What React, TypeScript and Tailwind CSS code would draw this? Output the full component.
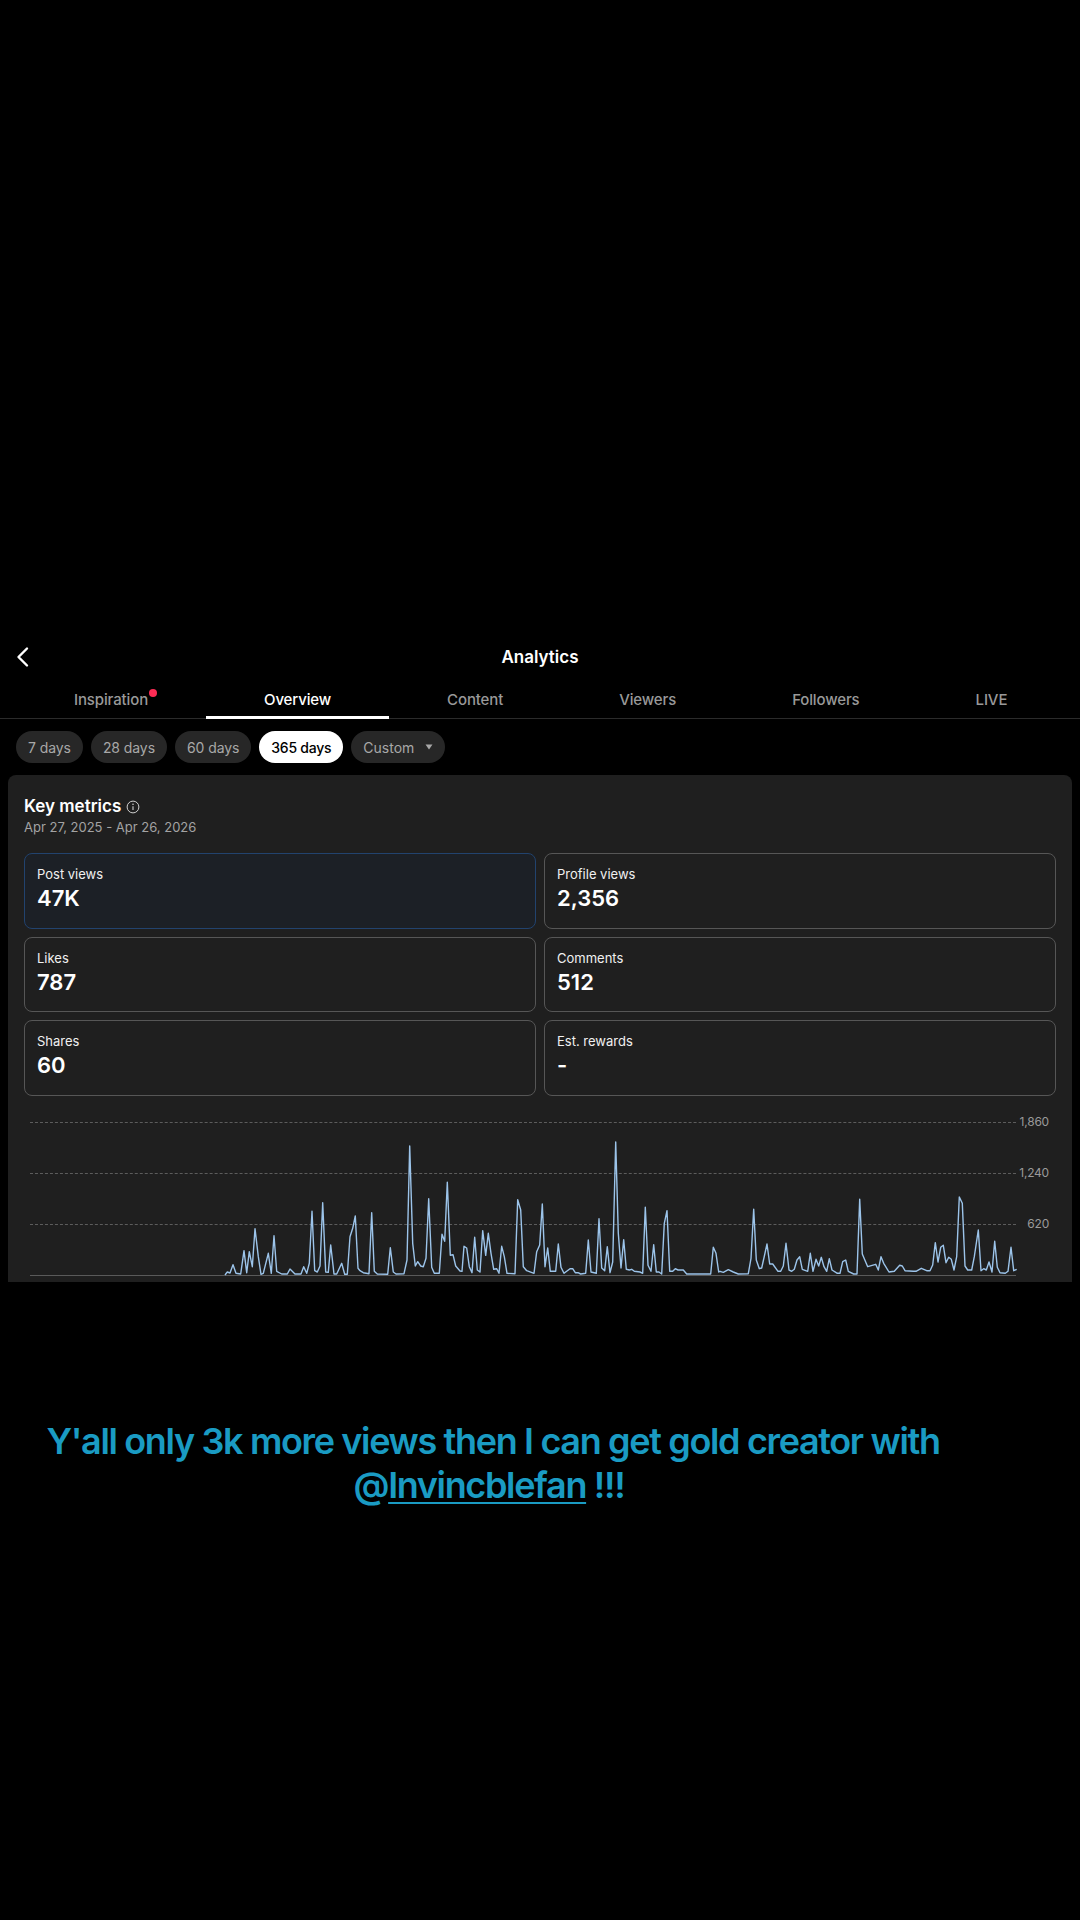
const seg3: number[] = [675,495,682,486,690,489,699,464,708,490,722,492,732,422,740,488,748,425,757,470,765,356,775,440,783,493,790,490,805,430,814,490,822,377,830,484,845,492,862,492,870,477,885,492,903,492,911,470,920,490,928,460,936,304,944,482,952,486,960,468,968,278,977,486,985,487,992,405,1002,492,1010,492,1025,460,1034,493,1042,493,1050,380,1058,355,1066,318,1074,475];
const seg4: number[] = [0,482,10,488,27,491,35,308,43,484,52,492,83,493,91,413,100,486,108,492,132,491,141,450,149,108,158,400,166,468,173,455,182,468,190,470,198,445,206,266,215,472,223,490,238,490,246,373,254,394,262,217,271,436,279,434,287,468,300,483,306,484,312,409,320,414,328,470,336,488,344,382,352,480,360,486,368,362,377,436,385,370,393,430,401,478,410,476,417,490,425,409,433,440,441,490,465,491,473,269,482,300,490,470,500,482,522,490,530,425,539,405,547,282,555,470,563,414,571,484,587,484,595,402,603,472,612,490,630,476,638,476,646,488,654,488,662,492,677,490,685,390,693,486,709,490,717,326,725,474,734,482,742,410,750,488,758,456,767,96,775,370,783,474,791,389,799,478,808,480,815,478,823,484,840,486,848,490,856,292,864,466,873,484,881,404,889,486,897,486,905,492,913,340,921,302,929,484,938,484,946,476,954,480,970,480,980,492,1052,492,1060,412,1068,430,1076,486];
const seg5: number[] = [0,484,10,487,25,479,40,486,55,492,85,491,93,445,101,298,109,450,118,476,125,474,141,402,149,462,158,462,174,484,182,484,190,468,198,400,207,480,215,484,223,478,231,450,239,440,247,478,263,484,271,430,279,484,288,448,296,468,304,442,312,470,320,484,328,446,336,480,352,490,360,490,368,455,377,450,385,484,401,492,411,492,419,268,427,432,443,470,467,463,475,480,483,440,491,460,507,486,523,484,539,466,547,468,555,482,580,484,588,484,604,475,620,482,630,482,638,465,646,398,654,456,662,412,670,406,678,458,686,442,694,448,702,480,710,440,718,261,727,280,735,468,743,480,755,480,763,440,775,360,783,482,791,476,799,480,807,456,816,486,824,394,832,472,840,488,856,490,864,484,873,412,881,482,890,478];

function toPoints(seg: number[], offset: number) {
  const out: string[] = [];
  for (let i = 0; i < seg.length; i += 2) {
    out.push(`${(offset + seg[i] / 3).toFixed(1)},${(seg[i + 1] / 3 + 1110).toFixed(1)}`);
  }
  return out.join(" ");
}
const points = [toPoints(seg3, 0), toPoints(seg4, 360), toPoints(seg5, 720)].join(" ");

const tabs = ["Inspiration", "Overview", "Content", "Viewers", "Followers", "LIVE"];
const pills = ["7 days", "28 days", "60 days"];
const metrics = [
  ["Post views", "47K"],
  ["Profile views", "2,356"],
  ["Likes", "787"],
  ["Comments", "512"],
  ["Shares", "60"],
  ["Est. rewards", "-"],
];

function GridRow({ label }: { label: string }) {
  return (
    <div className="flex h-[51px] items-start">
      <div className="w-[986px] border-t border-dashed border-[#5c5c5c]" />
      <div className="flex-1 -mt-[9px] flex justify-end text-[12px] leading-[18px] tracking-[-0.2px] text-[#9a9a9a] whitespace-nowrap">{label}</div>
    </div>
  );
}

export default function App() {
  return (
    <div className="w-[1080px] h-[1920px] bg-black overflow-hidden font-['Inter','Liberation_Sans',sans-serif] pt-[636px]">
      <div className="relative h-[42px] flex items-center justify-center pt-[1px]">
        <svg className="absolute left-[14px] top-[9px]" width="18" height="24" viewBox="0 0 18 24" fill="none">
          <path d="M13 3.5 L4.5 12 L13 20.5" stroke="#ffffff" strokeWidth="2.4" strokeLinecap="round" strokeLinejoin="round" />
        </svg>
        <span className="text-[17px] font-semibold text-white">Analytics</span>
      </div>

      <div className="flex h-[41px] pl-4 border-b border-[#2b2b2b]">
        {tabs.map((t, i) => (
          <div
            key={t}
            className={
              i === 1
                ? "relative px-[58px] pt-[6px] flex items-center text-[15px] tracking-[-0.13px] font-medium text-white whitespace-nowrap border-b-[3px] border-white -mb-px"
                : "relative px-[58px] pt-[6px] flex items-center text-[15px] tracking-[-0.13px] font-medium text-[#999999] whitespace-nowrap border-b-[3px] border-transparent -mb-px"
            }
          >
            {t}
            {i === 0 && <span className="absolute right-[49px] top-[11px] w-2 h-2 rounded-full bg-[#fe2c55]" />}
          </div>
        ))}
      </div>

      <div className="flex gap-2 pl-4 mt-3 h-8">
        {pills.map((p) => (
          <div key={p} className="h-8 px-3 flex items-center rounded-full bg-[#272727] text-[14px] tracking-[-0.08px] text-[#a8a8a8]">{p}</div>
        ))}
        <div className="h-8 px-3 flex items-center rounded-full bg-white text-[14px] font-medium tracking-[-0.25px] text-black">365 days</div>
        <div className="h-8 px-3 flex items-center gap-[11px] rounded-full bg-[#272727] text-[14px] text-[#a8a8a8]">
          Custom
          <svg width="8" height="6" viewBox="0 0 8 6"><path d="M0.5 0.5 H7.5 L4 5.5 Z" fill="#a8a8a8" /></svg>
        </div>
      </div>

      <div className="relative mx-2 mt-3 h-[507px] overflow-hidden rounded-t-[8px] bg-[#1f1f1f] px-4 pt-[21px]">
        <div className="flex items-center gap-[5px] h-[22px]">
          <span className="text-[17px] font-semibold text-white">Key metrics</span>
          <svg width="14" height="14" viewBox="0 0 14 14" fill="none">
            <circle cx="7" cy="7" r="5.9" stroke="#cfcfcf" strokeWidth="1" />
            <circle cx="7" cy="4.2" r="0.8" fill="#cfcfcf" />
            <path d="M7 6.2 V10" stroke="#cfcfcf" strokeWidth="1.1" />
          </svg>
        </div>
        <div className="text-[13px] leading-[19px] text-[#a3a3a3]">Apr 27, 2025 - Apr 26, 2026</div>

        <div className="grid grid-cols-2 gap-x-2 gap-y-[8px] mt-[16px]">
          {metrics.map(([l, v], i) => (
            <div
              key={l}
              className={
                i === 0
                  ? "h-[75.5px] rounded-[8px] border border-[#22436e] bg-[#1c2026] px-3 pt-[11px]"
                  : "h-[75.5px] rounded-[8px] border border-[#565656] px-3 pt-[11px]"
              }
            >
              <div className="text-[13px] leading-[18px] text-[#f0f0f0]">{l}</div>
              <div className="text-[22px] leading-[30px] font-semibold text-white">{v}</div>
            </div>
          ))}
        </div>

        <div className="ml-[6px] mt-[26px] w-[1019px]">
          <GridRow label="1,860" />
          <GridRow label="1,240" />
          <GridRow label="620" />
          <div className="w-[986px] border-t border-[#5a5a5a]" />
        </div>

        <svg className="absolute left-[-8px] top-[-775px]" width="1080" height="1282" viewBox="0 0 1080 1282" fill="none">
          <polyline points={points} stroke="#9cc4ea" strokeWidth="1.4" strokeLinejoin="round" fill="none" />
        </svg>
      </div>

      <div className="mt-[137px] w-[986px] text-center text-[36px] leading-[44px] font-semibold tracking-[-1.35px] text-[#1a9bc3]">
        <div>Y'all only 3k more views then I can get gold creator with</div>
        <div className="-ml-[8px]">@<span className="underline decoration-2 underline-offset-4">Invincblefan</span> !!!</div>
      </div>
    </div>
  );
}
